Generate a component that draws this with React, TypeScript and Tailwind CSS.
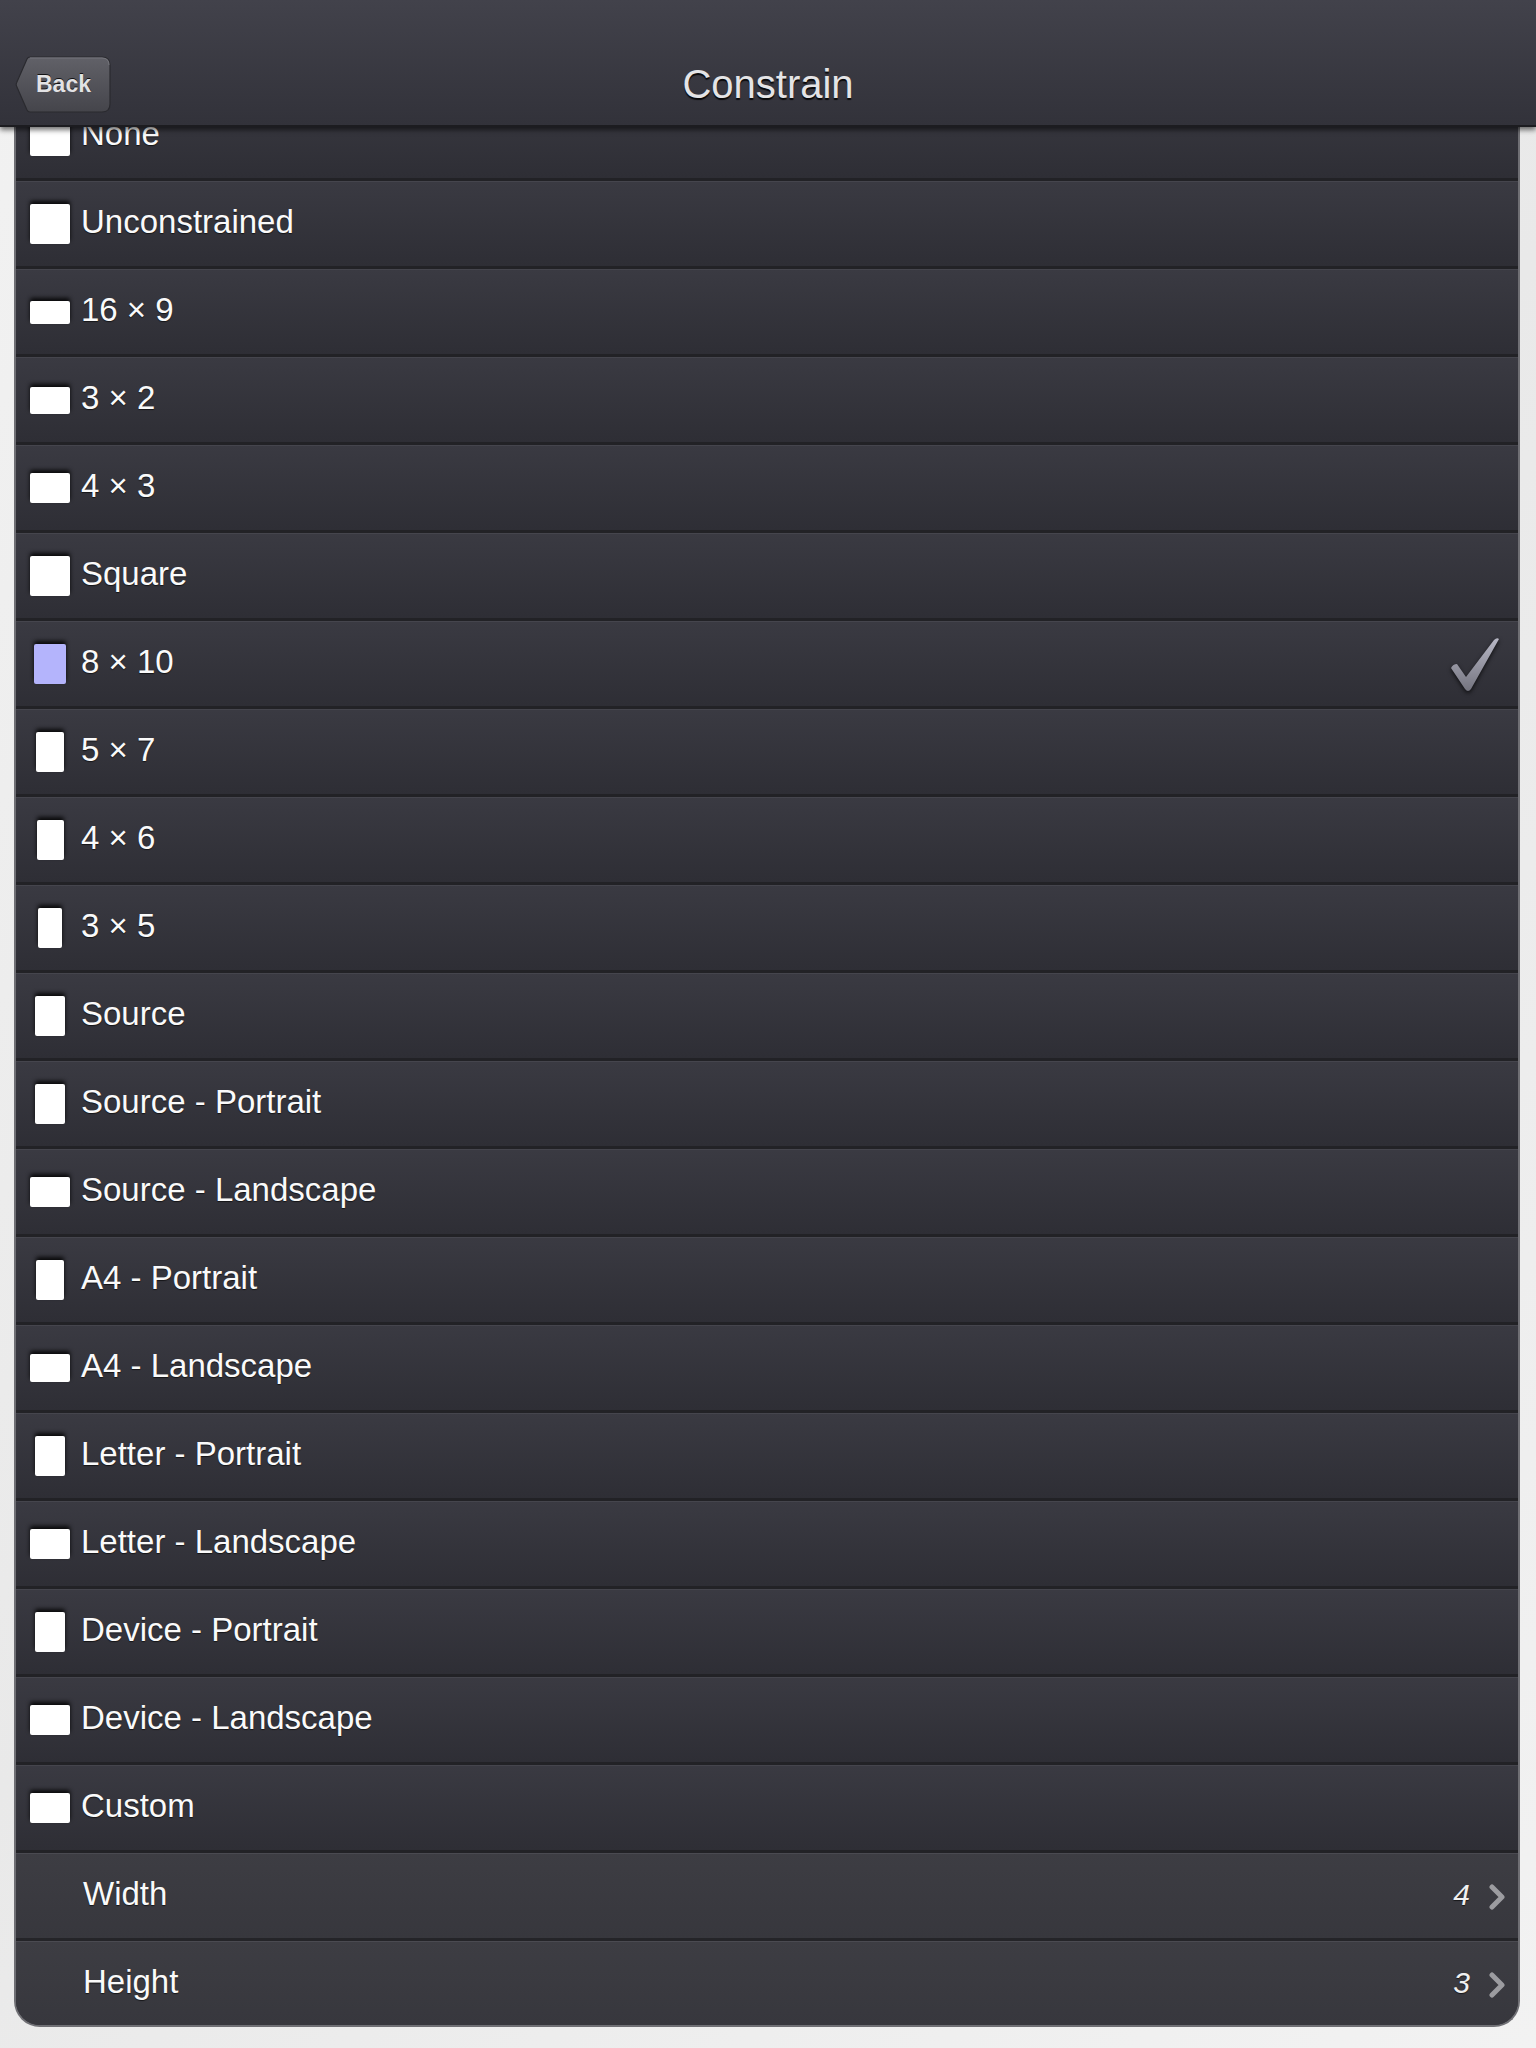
import React from "react";

type Item = { label: string; w: number; h: number; selected?: boolean };

const items: Item[] = [
  { label: "None", w: 40, h: 40 },
  { label: "Unconstrained", w: 40, h: 40 },
  { label: "16 × 9", w: 40, h: 23 },
  { label: "3 × 2", w: 40, h: 27 },
  { label: "4 × 3", w: 40, h: 30 },
  { label: "Square", w: 40, h: 40 },
  { label: "8 × 10", w: 32, h: 40, selected: true },
  { label: "5 × 7", w: 28, h: 40 },
  { label: "4 × 6", w: 27, h: 40 },
  { label: "3 × 5", w: 24, h: 40 },
  { label: "Source", w: 30, h: 40 },
  { label: "Source - Portrait", w: 30, h: 40 },
  { label: "Source - Landscape", w: 40, h: 30 },
  { label: "A4 - Portrait", w: 28, h: 40 },
  { label: "A4 - Landscape", w: 40, h: 28 },
  { label: "Letter - Portrait", w: 30, h: 40 },
  { label: "Letter - Landscape", w: 40, h: 30 },
  { label: "Device - Portrait", w: 30, h: 40 },
  { label: "Device - Landscape", w: 40, h: 30 },
  { label: "Custom", w: 40, h: 30 },
];

const font = { fontFamily: "'Liberation Sans', Arial, sans-serif" };

function Check() {
  return (
    <svg width="50" height="58" viewBox="0 0 50 58" className="drop-shadow-[0_2px_2px_rgba(0,0,0,0.7)]">
      <defs>
        <linearGradient id="ck" x1="0" y1="0" x2="0" y2="1">
          <stop offset="0" stopColor="#b8b8c6" />
          <stop offset="1" stopColor="#74747f" />
        </linearGradient>
      </defs>
      <path
        d="M1 32 Q3 28 7 28 L16 41 L44 4 Q47 1 49 3 L21 53 Q18 57 15 53 Z"
        fill="url(#ck)"
      />
    </svg>
  );
}

function Chevron() {
  return (
    <svg width="18" height="26" viewBox="0 0 18 26">
      <polyline
        points="4,3 14,13 4,23"
        fill="none"
        stroke="#9c9ca0"
        strokeWidth="5"
        strokeLinecap="round"
        strokeLinejoin="round"
      />
    </svg>
  );
}

function Row({ item }: { item: Item }) {
  return (
    <div className="h-[88px] flex items-center border-t border-t-[#45454d] border-b-[3px] border-b-[#222226] bg-gradient-to-b from-[#3a3a42] to-[#2e2e35]">
      <div className="ml-[14px] w-[40px] h-[40px] flex items-center justify-center">
        <div
          className={
            "rounded-[2px] shadow-[0_-3px_4px_rgba(0,0,0,0.85)] " +
            (item.selected ? "bg-[#b4b4fc]" : "bg-white")
          }
          style={{ width: item.w, height: item.h }}
        />
      </div>
      <span
        className="ml-[11px] mb-[5px] text-[33px] text-[#fafafa] leading-none [text-shadow:0_1px_1px_rgba(0,0,0,0.6)]"
        style={font}
      >
        {item.label}
      </span>
      {item.selected && (
        <div className="ml-auto mr-[18px] mt-[2px]">
          <Check />
        </div>
      )}
    </div>
  );
}

function ValueRow({ label, value, last }: { label: string; value: string; last?: boolean }) {
  return (
    <div
      className={
        "flex items-center border-t border-t-[#4a4a51] bg-gradient-to-b from-[#3d3d43] to-[#37373d] " +
        (last ? "h-[84px]" : "h-[88px] border-b-[3px] border-b-[#242428]")
      }
    >
      <span
        className="ml-[67px] mb-[5px] text-[33px] text-[#fafafa] leading-none [text-shadow:0_1px_1px_rgba(0,0,0,0.6)]"
        style={font}
      >
        {label}
      </span>
      <span
        className="ml-auto mb-[2px] text-[30px] italic text-[#f0f0f0] leading-none [text-shadow:0_1px_1px_rgba(0,0,0,0.6)]"
        style={font}
      >
        {value}
      </span>
      <div className="ml-[18px] mr-[12px] mt-[2px]">
        <Chevron />
      </div>
    </div>
  );
}

function BackButton() {
  return (
    <div className="relative ml-[15px] w-[96px] h-[57px] flex items-center">
      <svg width="96" height="57" viewBox="0 0 96 57" className="absolute inset-0">
        <defs>
          <linearGradient id="bb" x1="0" y1="0" x2="0" y2="1">
            <stop offset="0" stopColor="#616168" />
            <stop offset="1" stopColor="#45454b" />
          </linearGradient>
        </defs>
        <path
          d="M15 1 H87 Q95 1 95 9 V48 Q95 56 87 56 H15 Q13 56 12 54 L1.5 30 Q0.8 28.5 1.5 27 L12 3 Q13 1 15 1 Z"
          fill="url(#bb)"
          stroke="#2a2a2f"
          strokeWidth="1.2"
        />
        <path d="M15 2 H87 Q94 2 94 9" fill="none" stroke="#75757c" strokeWidth="1" />
      </svg>
      <span
        className="relative ml-[21px] text-[23px] font-bold text-[#e2e2e4] leading-none [text-shadow:0_-1px_0_rgba(0,0,0,0.8)]"
        style={font}
      >
        Back
      </span>
    </div>
  );
}

export default function App() {
  return (
    <div className="w-[1536px] h-[2048px] overflow-hidden bg-[#eeeeee] bg-[linear-gradient(135deg,#f2f2f2_0%,#e9e9e9_50%,#f2f2f2_100%)]">
      <header className="relative z-10 h-[127px] bg-gradient-to-b from-[#42424b] to-[#32323a] border-b-2 border-b-[#1c1c20] shadow-[0_3px_5px_rgba(0,0,0,0.55)] pt-[41px]">
        <div className="relative h-[86px] flex items-center">
          <BackButton />
          <div className="absolute inset-0 flex items-center justify-center pointer-events-none">
            <span
              className="text-[40px] text-[#e4e4e6] leading-none [text-shadow:0_2px_1px_rgba(0,0,0,0.85)]"
              style={font}
            >
              Constrain
            </span>
          </div>
        </div>
      </header>
      <div className="-mt-[34px] ml-[14px] mr-[16px] border-x-2 border-b-2 border-[#6f6f74] rounded-b-[26px] overflow-hidden bg-[#2e2e35]">
        {items.map((it) => (
          <Row key={it.label} item={it} />
        ))}
        <ValueRow label="Width" value="4" />
        <ValueRow label="Height" value="3" last />
      </div>
    </div>
  );
}
